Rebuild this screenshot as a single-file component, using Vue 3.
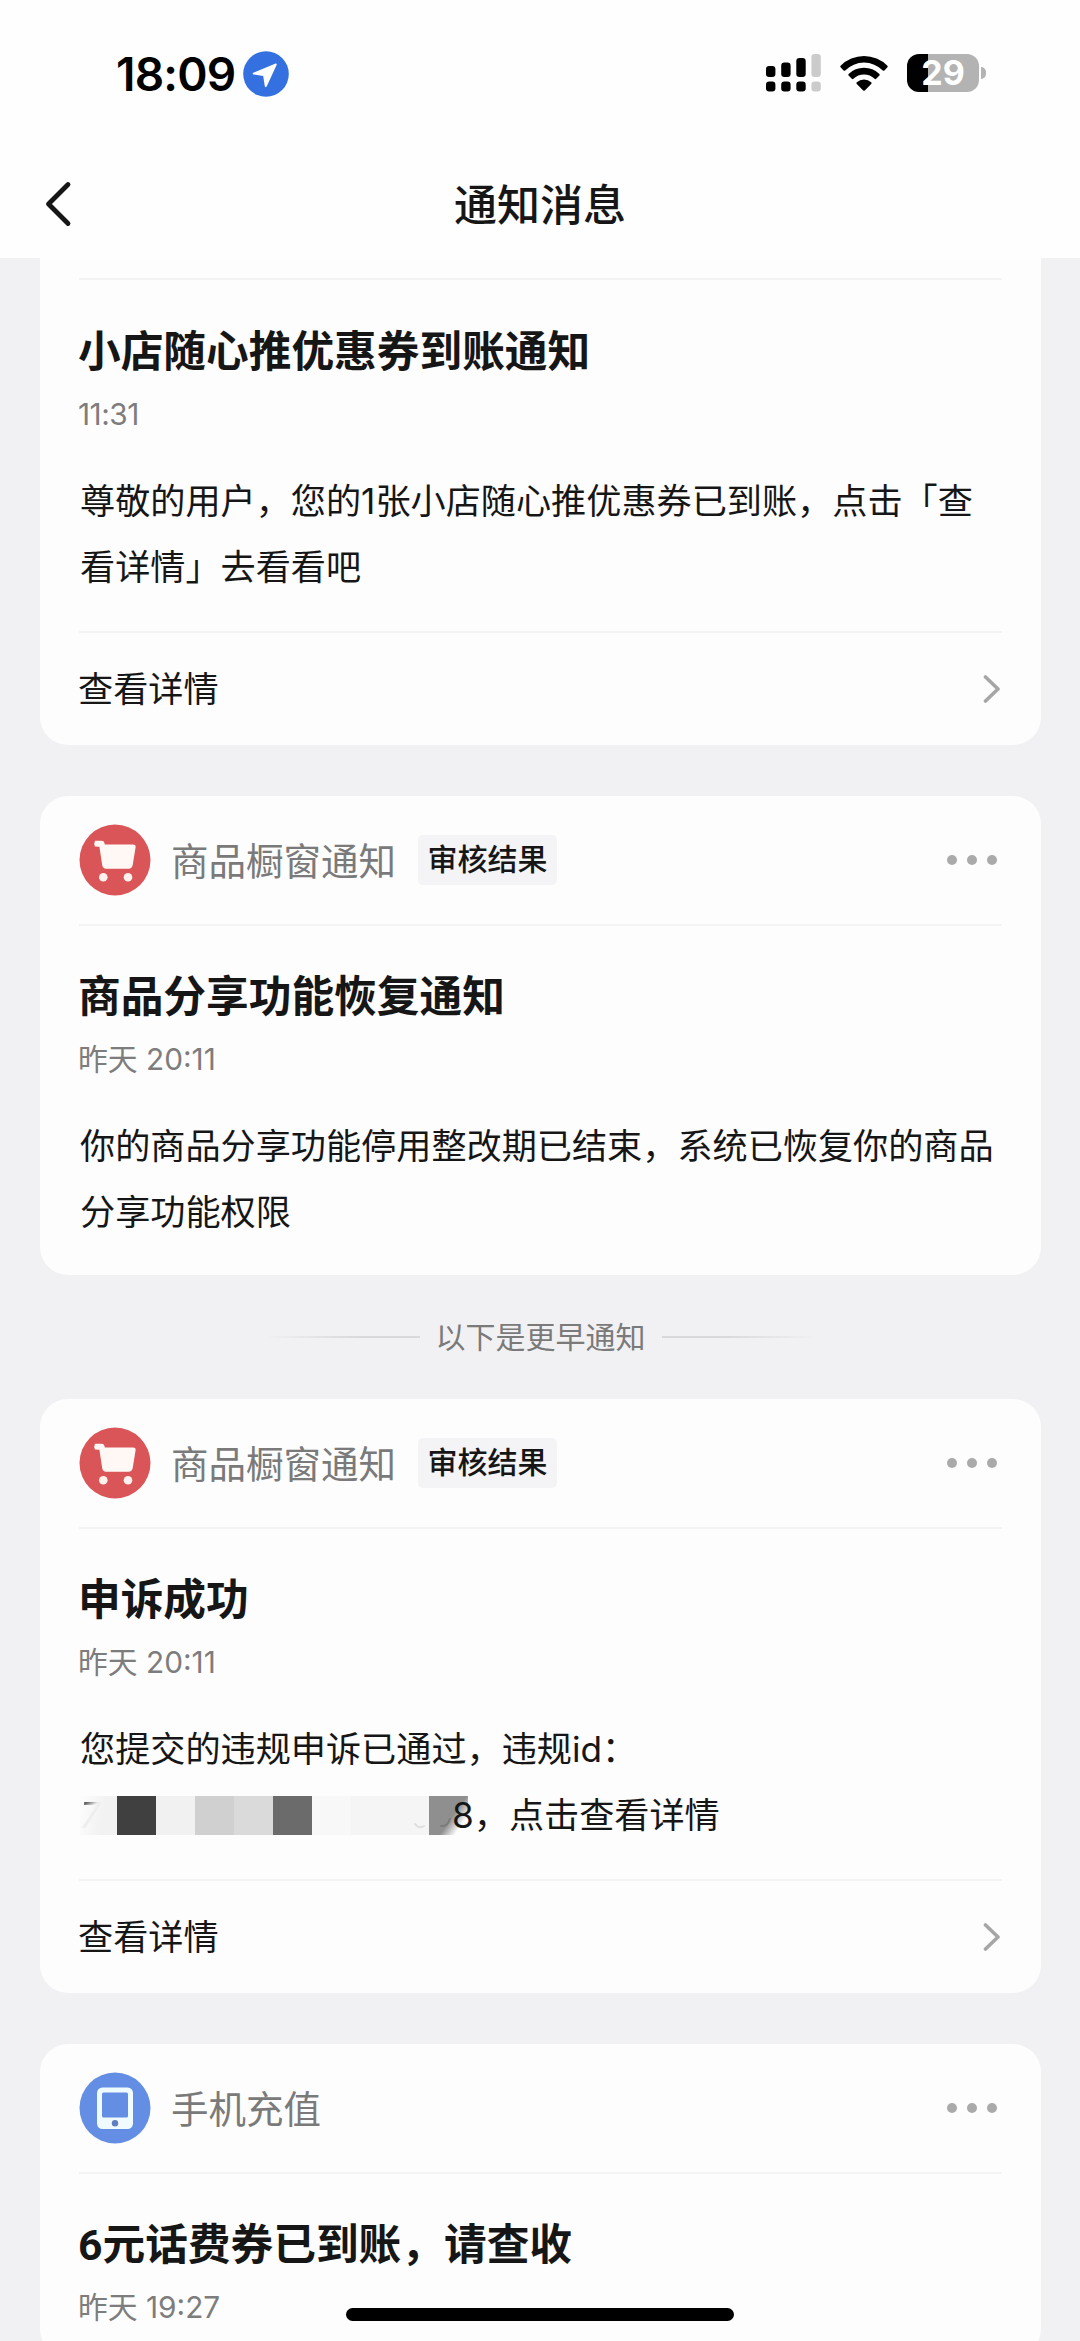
<script setup>
const notices = [
  {
    continued: true,
    title: '小店随心推优惠券到账通知',
    time: '11:31',
    lines: ['尊敬的用户，您的1张小店随心推优惠券已到账，点击「查', '看详情」去看看吧'],
    action: '查看详情',
  },
  {
    icon: 'cart',
    source: '商品橱窗通知',
    tag: '审核结果',
    title: '商品分享功能恢复通知',
    time: '昨天 20:11',
    lines: ['你的商品分享功能停用整改期已结束，系统已恢复你的商品', '分享功能权限'],
    earlierBelow: true,
  },
  {
    icon: 'cart',
    source: '商品橱窗通知',
    tag: '审核结果',
    title: '申诉成功',
    time: '昨天 20:11',
    lines: ['您提交的违规申诉已通过，违规id：'],
    masked: '8，点击查看详情',
    action: '查看详情',
  },
  {
    icon: 'phone',
    source: '手机充值',
    title: '6元话费券已到账，请查收',
    time: '昨天 19:27',
    lines: [],
  },
]
</script>

<template>
  <div class="screen">
    <header class="top">
      <div class="status">
        <span class="clock">18:09</span>
        <svg class="location" viewBox="0 0 46 46">
          <circle cx="23" cy="23" r="22.8" fill="#3470e0" />
          <path d="M32.600 12.600 10.200 21.800q-1.300.9.2 1.600l9.800 1.700 1.600 10.100q1 1.900 2.100-.1L33.700 13.800q.3-1.500-1.100-1.200z" fill="#fff" />
        </svg>
        <span class="spacer"></span>
        <svg class="signal" viewBox="0 0 55 38">
          <g fill="#000">
            <rect x="0" y="12" width="9.4" height="11" rx="3.2" />
            <rect x="15.2" y="8.5" width="9.4" height="14.5" rx="3.2" />
            <rect x="30.3" y="4" width="9.4" height="19" rx="3.2" />
            <rect x="0" y="27.5" width="9.4" height="10" rx="3.2" />
            <rect x="15.2" y="27.5" width="9.4" height="10" rx="3.2" />
            <rect x="30.3" y="27.5" width="9.4" height="10" rx="3.2" />
          </g>
          <g fill="#cbcbcb">
            <rect x="45.4" y="0" width="9.4" height="23" rx="3.2" />
            <rect x="45.4" y="27.5" width="9.4" height="10" rx="3.2" />
          </g>
        </svg>
        <svg class="wifi" viewBox="0 0 48 36">
          <path d="M.6 10.7a33.2 33.2 0 0 1 46.8 0q.7.8 0 1.6l-3 3.1q-.8.7-1.6 0a26.6 26.6 0 0 0-37.6 0q-.8.7-1.6 0l-3-3.1q-.7-.8 0-1.6z" />
          <path d="M8.6 19a21.8 21.8 0 0 1 30.8 0q.7.8 0 1.6l-3.2 3.2q-.8.7-1.6 0a15.2 15.2 0 0 0-21.2 0q-.8.7-1.6 0l-3.2-3.2q-.7-.8 0-1.6z" />
          <path d="M16.8 27.3a10.4 10.4 0 0 1 14.4 0q.8.8 0 1.6l-6.4 6.6q-.8.7-1.6 0l-6.4-6.6q-.8-.8 0-1.6z" />
        </svg>
        <div class="battery">
          <div class="cell"><span>29</span></div>
          <i class="nub"></i>
        </div>
      </div>
      <div class="nav">
        <svg class="back" viewBox="0 0 28 48">
          <path d="M24 4.500 4.500 24 24 43.500" fill="none" stroke="#161616" stroke-width="4.800" stroke-linecap="round" stroke-linejoin="round" />
        </svg>
        <h1>通知消息</h1>
        <span class="side"></span>
      </div>
    </header>

    <main class="feed">
      <template v-for="(n, i) in notices" :key="i">
        <article class="card" :class="{ continued: n.continued, plain: !n.action }">
          <div v-if="!n.continued" class="head">
            <svg v-if="n.icon === 'cart'" class="badge" viewBox="0 0 72 72">
              <circle cx="36" cy="36" r="35.500" fill="#d95558" />
              <path d="M16 16.800h6.500q2.500 0 3 2.300l.3 1.400H54q3 0 2.600 2.800L53.700 41q-.6 3.700-4.200 3.700H27.200q-3.400 0-4-3.400l-2.800-18.500-4.400-.4q-1.500-2.800 0-5.600z" fill="#fff8f5" />
              <circle cx="24.300" cy="53.200" r="4.300" fill="#fff1ee" />
              <circle cx="49" cy="53.200" r="4.300" fill="#fff1ee" />
            </svg>
            <svg v-else class="badge" viewBox="0 0 72 72">
              <circle cx="36" cy="36" r="35.500" fill="#638ee4" />
              <rect x="18" y="15.500" width="36" height="41.500" rx="5.500" fill="#f0fbff" />
              <rect x="23" y="20.500" width="26" height="25" rx="1.500" fill="#638ee4" />
              <circle cx="36" cy="51.200" r="3.200" fill="#5f7fc0" />
            </svg>
            <span class="source">{{ n.source }}</span>
            <span v-if="n.tag" class="tag">{{ n.tag }}</span>
            <span class="more"><i></i><i></i><i></i></span>
          </div>
          <div class="rule"></div>
          <h2>{{ n.title }}</h2>
          <time :class="{ short: n.continued }">{{ n.time }}</time>
          <div v-if="n.lines.length" class="body">
            <p v-for="line in n.lines" :key="line">{{ line }}</p>
            <p v-if="n.masked" class="masked">
              <span class="mosaic">
                <i class="m0"><b>7</b></i><i class="m1"></i><i class="m2"></i><i class="m3"></i><i class="m4"></i>
                <i class="m5"></i><i class="m6"></i><i class="m7"></i><i class="m7"></i><i class="m8"></i>
                <svg class="traces" viewBox="0 0 46 12" fill="none" stroke-linecap="round">
                  <path d="M2 6q4 5 9 2" stroke="#dedede" stroke-width="2" />
                  <path d="M28 8q7 1 9-8" stroke="#7c7c7c" stroke-width="2" />
                </svg>
              </span>
              <span class="rest">{{ n.masked }}</span>
            </p>
          </div>
          <template v-if="n.action">
            <div class="rule"></div>
            <div class="action">
              <span>{{ n.action }}</span>
              <svg viewBox="0 0 18 30">
                <path d="M2.500 3 15 15 2.500 27" fill="none" stroke="#a6a6a6" stroke-width="3.600" stroke-linecap="round" stroke-linejoin="round" />
              </svg>
            </div>
          </template>
        </article>
        <div v-if="n.earlierBelow" class="earlier">
          <i></i><span>以下是更早通知</span><i class="right"></i>
        </div>
      </template>
    </main>
    <div class="home"></div>
  </div>
</template>

<style>
body {
  background: #f1f1f3;
}
</style>

<style scoped>
.screen {
  position: relative;
  width: 1080px;
  height: 2341px;
  overflow: hidden;
  display: flex;
  flex-direction: column;
  background: #f1f1f3;
  color: #161616;
  font-family: Inter, "Noto Sans CJK SC", sans-serif;
  text-spacing-trim: space-all;
  white-space: nowrap;
}
h1, h2, p {
  margin: 0;
}
svg, time {
  display: block;
}
.top {
  flex: none;
  height: 258px;
  background: #fefefe;
}
.status {
  display: flex;
  align-items: center;
  height: 64px;
  padding: 41px 94px 0 116px;
}
.clock {
  width: 127px;
  padding-top: 2px;
  color: #000;
  font-size: 46px;
  font-weight: 600;
  letter-spacing: -0.8px;
}
.location {
  width: 46px;
  height: 46px;
  margin-top: 2px;
}
.spacer {
  flex: 1;
}
.signal {
  width: 55px;
  height: 38px;
}
.wifi {
  width: 48px;
  height: 36px;
  margin-left: 19px;
}
.battery {
  display: flex;
  align-items: center;
  gap: 2px;
  margin-left: 19px;
}
.cell {
  width: 72px;
  height: 38px;
  border-radius: 12px;
  background: linear-gradient(90deg, #000 21px, #b3b3b3 21px);
  color: #fff;
  font-size: 34px;
  font-weight: 700;
  line-height: 38px;
  text-align: center;
}
.nub {
  width: 5px;
  height: 12px;
  border-radius: 0 5px 5px 0;
  background: #b3b3b3;
}
.nav {
  display: flex;
  align-items: center;
  justify-content: space-between;
  height: 60px;
  margin-top: 69px;
  padding: 0 44px;
}
.back, .side {
  width: 28px;
  height: 48px;
}
h1 {
  padding-top: 2px;
  font-size: 43px;
  font-weight: 500;
  line-height: 60px;
}
.feed {
  padding: 0 39px 0 40px;
}
.card {
  margin-bottom: 51px;
  padding: 0 39px;
  border-radius: 28px;
  background: #fdfdfd;
}
.card.plain {
  margin-bottom: 0;
  padding-bottom: 30px;
}
.card.continued {
  padding-top: 20px;
  border-radius: 0 0 28px 28px;
}
.continued h2 {
  margin-top: 42px;
}
.head {
  display: flex;
  align-items: center;
  height: 128px;
}
.badge {
  width: 72px;
  height: 72px;
}
.source {
  margin-left: 20px;
  padding-bottom: 4px;
  color: #7a7a7a;
  font-size: 37.500px;
}
.tag {
  width: 139px;
  height: 50px;
  margin-left: 22px;
  border-radius: 5px;
  background: #f4f4f6;
  font-size: 30px;
  font-weight: 500;
  line-height: 49px;
  text-align: center;
}
.more {
  display: flex;
  gap: 9.500px;
  margin: 0 5px 0 auto;
}
.more i {
  width: 10.500px;
  height: 10.500px;
  border-radius: 50%;
  background: #aaa;
}
.rule {
  height: 2px;
  background: #f3f3f4;
}
h2 {
  margin: 41px 0 0 -1px;
  font-family: Roboto, "Noto Sans CJK SC", sans-serif;
  font-size: 42.700px;
  font-weight: 700;
  line-height: 60px;
}
time {
  margin: 12px 0 0 -1px;
  color: #7d7d7d;
  font-size: 29.800px;
  line-height: 40px;
}
time.short {
  letter-spacing: -0.5px;
}
.body {
  margin: 34px 0 31px;
  padding-left: 1px;
}
.body p {
  height: 66px;
  font-size: 35.150px;
  line-height: 66px;
}
.plain .body {
  margin-bottom: 0;
}
.body .masked {
  display: flex;
  align-items: center;
}
.mosaic {
  position: relative;
  display: flex;
  flex: none;
  width: 372px;
  height: 39px;
}
.mosaic i {
  flex: none;
  width: 39px;
  height: 39px;
}
.mosaic .m0 {
  width: 37px;
  background: linear-gradient(100deg, #fdfdfd, #f2f2f2 60%);
}
.m0 b {
  display: block;
  color: transparent;
  background: linear-gradient(150deg, #222 12%, #eee 28%);
  background-clip: text;
  font-weight: 400;
  line-height: 39px;
}
.m1 { background: #404040; }
.m2 { background: #f1f1f1; }
.m3 { background: #d0d0d0; }
.m4 { background: #dadada; }
.m5 { background: #6b6b6b; }
.m6 { background: #f8f8f8; }
.m7 { background: #f5f5f5; }
.mosaic .m8 {
  background: linear-gradient(125deg, #8f8f8f 57%, #fdfdfd 80%);
}
.traces {
  position: absolute;
  left: 333px;
  bottom: 5px;
  width: 46px;
  height: 12px;
}
.rest {
  position: relative;
}
.action {
  display: flex;
  align-items: center;
  justify-content: space-between;
  height: 109px;
  padding: 1px 1px 0 0;
  margin-bottom: 2px;
  font-size: 35.150px;
}
.action span {
  margin-left: -1px;
  padding-bottom: 5px;
}
.action svg {
  width: 18px;
  height: 30px;
}
.card:has(.action) {
  padding-bottom: 0.02px;
}
.earlier {
  display: flex;
  align-items: center;
  justify-content: center;
  gap: 16px;
  height: 124px;
  color: #7a7a7a;
  font-size: 30px;
}
.earlier span {
  padding-bottom: 5px;
}
.earlier i {
  width: 155px;
  height: 2px;
  background: linear-gradient(90deg, transparent, #d9d9db 60%);
}
.earlier .right {
  background: linear-gradient(270deg, transparent, #d9d9db 60%);
}
.home {
  position: absolute;
  left: 346px;
  top: 2308px;
  width: 388px;
  height: 13px;
  border-radius: 7px;
  background: #000;
}
</style>
